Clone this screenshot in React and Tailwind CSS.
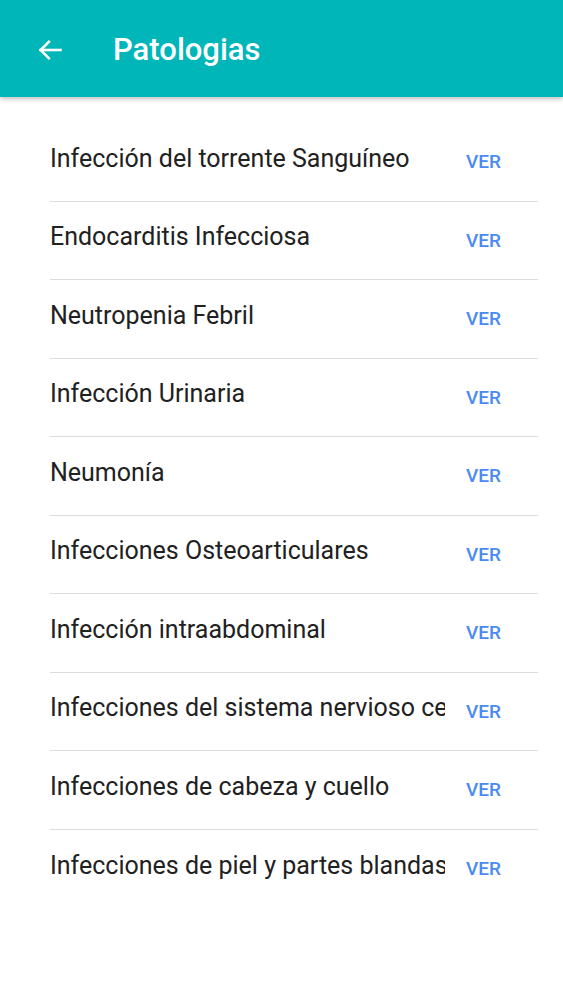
import React from "react";

const items = [
  "Infección del torrente Sanguíneo",
  "Endocarditis Infecciosa",
  "Neutropenia Febril",
  "Infección Urinaria",
  "Neumonía",
  "Infecciones Osteoarticulares",
  "Infección intraabdominal",
  "Infecciones del sistema nervioso central",
  "Infecciones de cabeza y cuello",
  "Infecciones de piel y partes blandas",
];

function App() {
  return (
    <div className="min-h-screen bg-white font-['Roboto',sans-serif]">
      {/* Header */}
      <div className="h-[97px] bg-[#00b6b8] flex items-center shadow-[0_2px_5px_rgba(0,0,0,0.25)] relative z-10">
        <div className="w-[113px] flex items-center pl-[36px] pt-[2px]">
          <svg width="28" height="28" viewBox="0 0 24 24" fill="none" stroke="white" strokeWidth="2.2" strokeLinecap="square">
            <path d="M21 12H4" />
            <path d="M11 5l-7 7 7 7" />
          </svg>
        </div>
        <h1 className="text-white text-[31px] font-medium leading-none pt-[2px]">
          Patologias
        </h1>
      </div>

      {/* List */}
      <div className="pt-[26px] pl-[50px] pr-[25px]">
        {items.map((item, index) => (
          <div
            key={index}
            className={`h-[78.5px] flex items-center ${
              index < items.length - 1 ? "border-b border-[#dcdcdc]" : ""
            }`}
          >
            <div className="w-[395px] overflow-hidden whitespace-nowrap text-[25px] text-[#212121] leading-[32px] pb-[6px]">
              {item}
            </div>
            <div className="flex-1 flex justify-center pr-[16px]">
              <span className="text-[19px] font-medium text-[#4a8af4] leading-none">
                VER
              </span>
            </div>
          </div>
        ))}
      </div>
    </div>
  );
}

export default App;
